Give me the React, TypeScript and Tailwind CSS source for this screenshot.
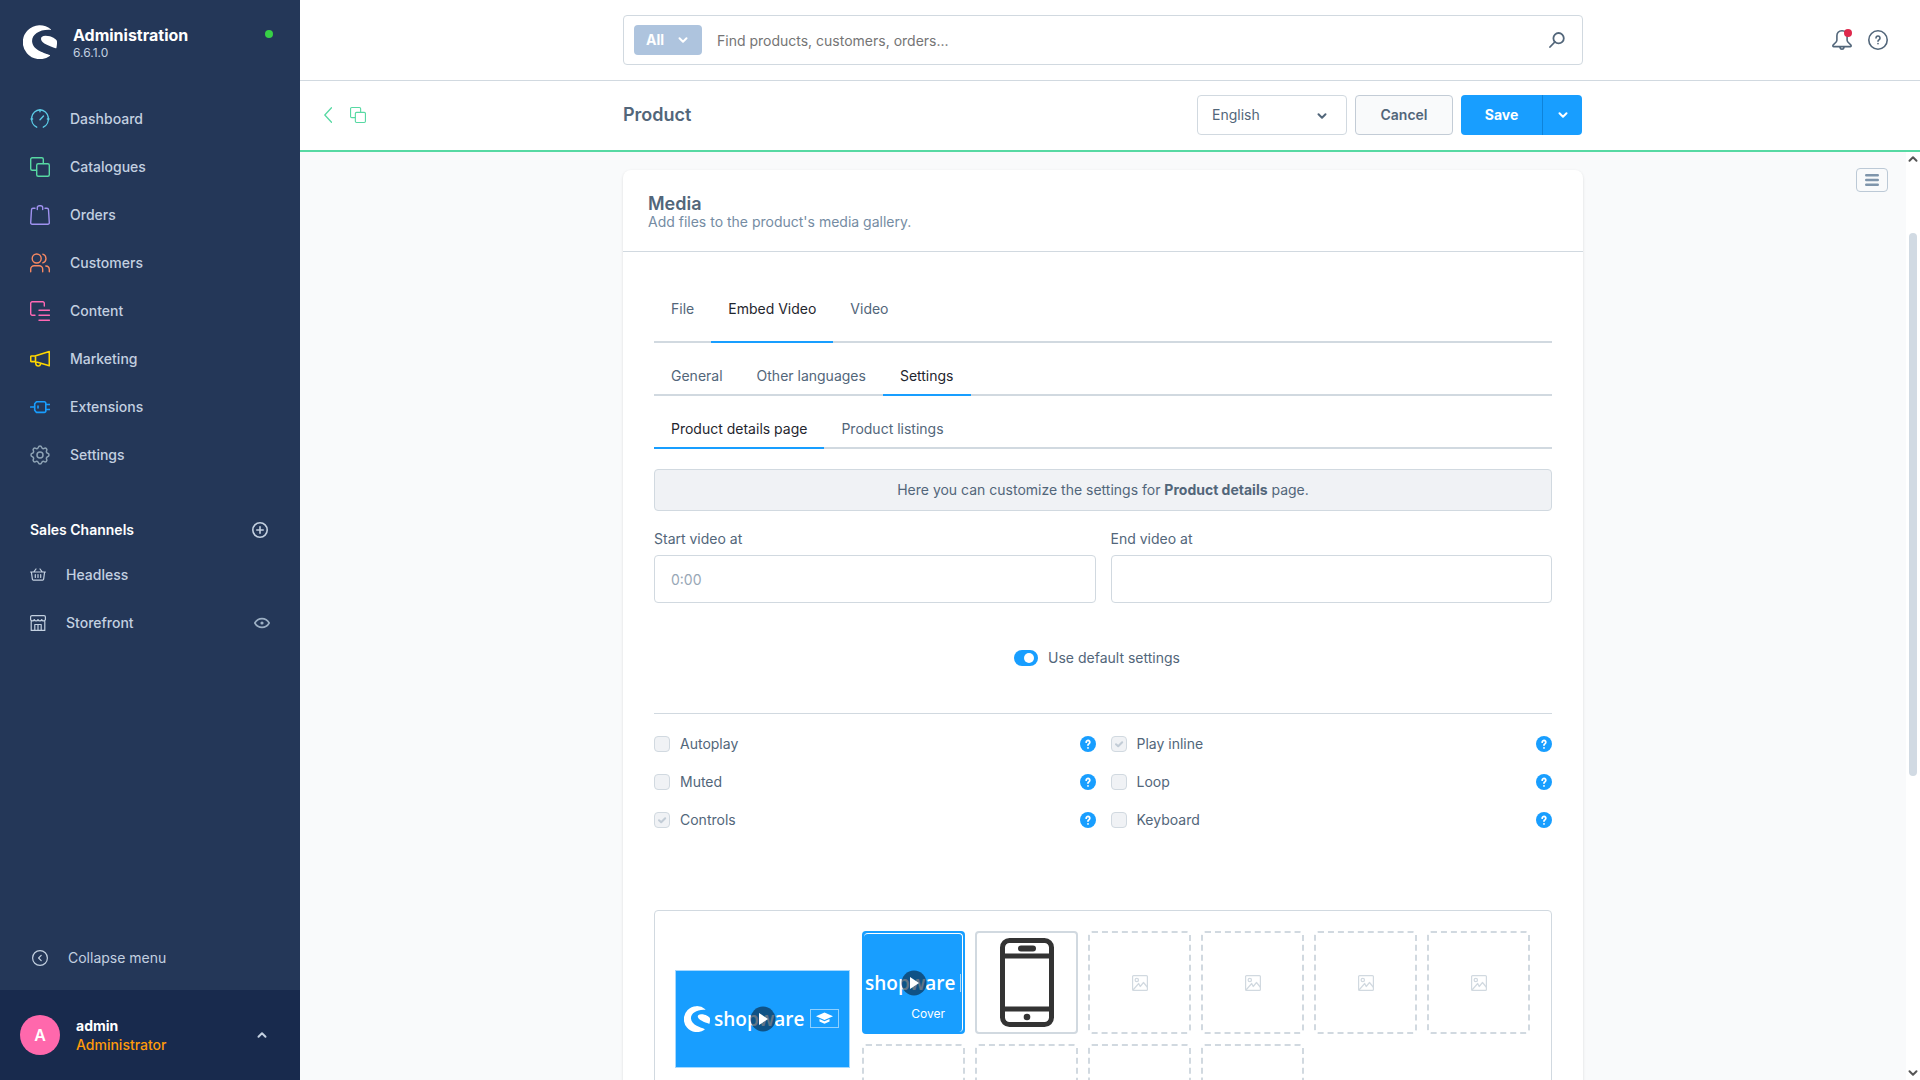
import { ReactNode, useState } from "react";
import clsx from "clsx";
import { TbSettings } from "react-icons/tb";

const Icon = ({
  size = 20,
  box = 20,
  stroke = 1.4,
  className,
  children,
}: {
  size?: number;
  box?: number;
  stroke?: number;
  className?: string;
  children: ReactNode;
}) => (
  <svg
    width={size}
    height={size}
    viewBox={`0 0 ${box} ${box}`}
    fill="none"
    stroke="currentColor"
    strokeWidth={stroke}
    strokeLinecap="round"
    strokeLinejoin="round"
    className={clsx("shrink-0", className)}
    aria-hidden="true"
  >
    {children}
  </svg>
);

const Chevron = ({ up = false, className }: { up?: boolean; className?: string }) => (
  <Icon size={10} box={10} stroke={2} className={className}>
    <path d={up ? "M1.5 6.7 5 3.3 8.5 6.7" : "M1.5 3.3 5 6.7 8.5 3.3"} />
  </Icon>
);

const CopyPath = () => (
  <>
    <path d="M6.5 13.3H2.2A1.5 1.5 0 0 1 .7 11.8V2.2A1.5 1.5 0 0 1 2.2.7h9.6a1.5 1.5 0 0 1 1.5 1.5v4.3" />
    <rect x="6.7" y="6.7" width="12.6" height="12.6" rx="1.5" />
  </>
);

const ShopwareMark = ({ size, className }: { size: number; className?: string }) => (
  <svg
    width={size}
    height={size}
    viewBox="0 0 34 34"
    fill="currentColor"
    className={clsx("shrink-0", className)}
    aria-hidden="true"
  >
    <path d="M27.8 4.2A17 17 0 1 0 26.8 30.9c.4-.3.4-.7-.1-.9-3.9-1.6-17.1-4.6-17.6-13.5C8.8 9.6 16.5 4.2 27.5 4.9c.5 0 .7-.4.3-.7z" />
    <path d="M33.9 16c-.3-1.5-5-5.2-11.4-5.2-3.8 0-4.8 1.8-4.4 3.7.7 3.9 8.4 6.6 14.6 8.8.4.1.6 0 .7-.4.5-2.2.8-4.6.5-6.9z" />
  </svg>
);

const navItems = [
  {
    label: "Dashboard",
    color: "text-[#5bcbe6]",
    icon: (
      <Icon>
        <path d="M6.7 18.2A9.2 9.2 0 0 1 10 .8a9.2 9.2 0 0 1 3.3 17.4M10 1v1.8M1 10h1.6M17.4 10H19M10 10.8 13.5 7" />
      </Icon>
    ),
  },
  {
    label: "Catalogues",
    color: "text-[#57d9a3]",
    icon: (
      <Icon>
        <CopyPath />
      </Icon>
    ),
  },
  {
    label: "Orders",
    color: "text-[#a092f0]",
    icon: (
      <Icon>
        <path d="M5 3.3H3A1.5 1.5 0 0 0 1.5 4.7L.7 17.7a1.5 1.5 0 0 0 1.5 1.6h15.6a1.5 1.5 0 0 0 1.5-1.6l-.8-13A1.5 1.5 0 0 0 17 3.3h-2M7.3 4.5V2.7a2 2 0 0 1 2-2h1.4a2 2 0 0 1 2 2v1.8" />
      </Icon>
    ),
  },
  {
    label: "Customers",
    color: "text-[#f88962]",
    icon: (
      <Icon>
        <circle cx="6.7" cy="5.5" r="4.5" />
        <path d="M.7 18.7v-2.4a3.5 3.5 0 0 1 3.5-3.5h5a3.5 3.5 0 0 1 3.5 3.5v2.4M12.8 1.2a4.5 4.5 0 0 1 0 8.6M15.8 13a3.7 3.7 0 0 1 3.5 3.7v2" />
      </Icon>
    ),
  },
  {
    label: "Content",
    color: "text-[#ff68b4]",
    icon: (
      <Icon>
        <path d="M14.3 5V2.2A1.5 1.5 0 0 0 12.8.7H2.2A1.5 1.5 0 0 0 .7 2.2v10.6a1.5 1.5 0 0 0 1.5 1.5H5M9 9.3h10.5M9 14.3h10.5M9 19.3h10.5" />
      </Icon>
    ),
  },
  {
    label: "Marketing",
    color: "text-[#ffd700]",
    icon: (
      <Icon stroke={1.6}>
        <path d="M5 7H1.6a.9.9 0 0 0-.9.9v3.8a.9.9 0 0 0 .9.9H5l14.3 4.2V2.6zM5.5 7v5.6M5.8 13.2v1.7a2.4 2.4 0 0 0 4.7.4" />
      </Icon>
    ),
  },
  {
    label: "Extensions",
    color: "text-[#189eff]",
    icon: (
      <Icon stroke={1.6}>
        <path d="M.7 10h4M6.5 4.8h7.8a1.5 1.5 0 0 1 1.5 1.5v7.6a1.5 1.5 0 0 1-1.5 1.5H6.5L4.7 13.3V6.8zM16 7.5h3.5M16 12.5h3.5M8 9v2" />
      </Icon>
    ),
  },
  {
    label: "Settings",
    color: "text-[#8ea3b5]",
    icon: <TbSettings size={24} strokeWidth={1.5} className="-mx-0.5 shrink-0" />,
  },
];

const Sidebar = () => (
  <aside className="flex w-[300px] shrink-0 flex-col bg-[#243758] text-sm text-[#c3d0e0]">
    <div className="flex items-start px-[23px] pt-[25px]">
      <ShopwareMark size={34} className="text-white" />
      <div className="ml-4 flex-1">
        <p className="text-base leading-5 font-bold text-white">Administration</p>
        <p className="text-xs leading-4">6.6.1.0</p>
      </div>
      <span className="mt-[5px] mr-1 size-2 rounded-full bg-[#37d046]" />
    </div>

    <nav className="mt-[34px] font-medium">
      {navItems.map((item) => (
        <a key={item.label} href="#" className="flex h-12 items-center gap-5 px-[30px]">
          <span className={clsx("flex w-5 justify-center", item.color)}>{item.icon}</span>
          {item.label}
        </a>
      ))}
    </nav>

    <section className="mt-7">
      <div className="flex h-[46px] items-center justify-between pr-8 pl-[30px]">
        <h2 className="font-semibold text-white">Sales Channels</h2>
        <button type="button" aria-label="Add sales channel">
          <Icon size={16} box={16} stroke={1.6}>
            <circle cx="8" cy="8" r="7.2" />
            <path d="M8 4.8v6.4M4.8 8h6.4" />
          </Icon>
        </button>
      </div>
      <a href="#" className="flex h-11 items-center gap-5 px-[30px] font-medium">
        <Icon size={16} box={16} stroke={1.2}>
          <path d="M.6 5h14.8M1.4 5l1 7.3a1 1 0 0 0 1 .9h9.2a1 1 0 0 0 1-.9l1-7.3M3.8 4.8 6 2M12.2 4.8 10 2M5.3 7.5v3M8 7.5v3M10.7 7.5v3" />
        </Icon>
        Headless
      </a>
      <a href="#" className="flex h-[52px] items-center gap-5 px-[30px] font-medium">
        <Icon size={16} box={16} stroke={1.2}>
          <path d="M.6 4.5V2A1.4 1.4 0 0 1 2 .6h12A1.4 1.4 0 0 1 15.4 2v2.5M.6 4.5a1.9 1.9 0 0 0 3.7 0 1.9 1.9 0 0 0 3.7 0 1.9 1.9 0 0 0 3.7 0 1.9 1.9 0 0 0 3.7 0M1.2 6.5v8.9h13.6V6.5M4.8 15.4V9.5h6.4v5.9M8 9.5v5.9" />
        </Icon>
        <span className="flex-1">Storefront</span>
        <Icon size={16} box={16} stroke={1.6} className="text-[#9db0c4]">
          <path d="M.8 8C2.4 5.2 5 3.6 8 3.6S13.6 5.2 15.2 8c-1.6 2.8-4.2 4.4-7.2 4.4S2.4 10.8.8 8z" />
          <circle cx="8" cy="8" r=".8" />
        </Icon>
      </a>
    </section>

    <button type="button" className="mt-auto flex h-16 items-center gap-5 px-8">
      <Icon size={16} box={16} stroke={1.2}>
        <circle cx="8" cy="8" r="7.4" />
        <path d="M9.2 5.4 6.6 8l2.6 2.6" />
      </Icon>
      Collapse menu
    </button>

    <div className="flex h-[90px] shrink-0 items-center gap-4 bg-[#182a4d] pr-[33px] pl-5">
      <span className="flex size-10 items-center justify-center rounded-full bg-[#ff68ac] text-base font-semibold text-white">
        A
      </span>
      <div className="flex-1 leading-[19px]">
        <p className="font-bold text-white">admin</p>
        <p className="font-medium text-[#ff9a0a]">Administrator</p>
      </div>
      <button type="button" aria-label="Open user menu">
        <Chevron up />
      </button>
    </div>
  </aside>
);

const SearchBar = () => (
  <header className="grid h-[81px] shrink-0 grid-cols-[1fr_minmax(0,960px)_1fr] items-center border-b border-[#d1d9e0] bg-white pr-[14px]">
    <div className="col-start-2 flex h-[50px] items-center rounded border border-[#d1d9e0] pr-[17px] pl-[10px]">
      <button
        type="button"
        className="flex h-[30px] w-[68px] items-center justify-between rounded bg-[#aec4de] pr-[14px] pl-3 text-sm font-bold text-white"
      >
        All
        <Chevron />
      </button>
      <input
        type="search"
        aria-label="Search"
        placeholder="Find products, customers, orders..."
        className="ml-[15px] h-10 flex-1 text-sm outline-none placeholder:text-[#757575]"
      />
      <Icon size={16} box={16} stroke={1.8} className="text-[#52667a]">
        <circle cx="9.6" cy="6.2" r="5.2" />
        <path d="M5.8 10 1 15" />
      </Icon>
    </div>
    <div className="flex items-center justify-end gap-4 pr-[18px] text-[#52667a]">
      <button type="button" aria-label="Notifications" className="relative">
        <Icon stroke={1.6}>
          <path d="M10 .8C6.6.8 4.9 3 4.9 5.8v4.4c0 2.9-4.1 3.7-4.1 5.6 0 .5.4.8.8.8h16.8c.4 0 .8-.3.8-.8 0-1.900-4.100-2.700-4.100-5.600V5.800C15.100 3 13.400.8 10 .8zM8 17.500c.2 1.100 1 1.700 2 1.700s1.800-.6 2-1.700" />
        </Icon>
        <span className="absolute -top-px right-0 size-2 rounded-full bg-[#de294c]" />
      </button>
      <button type="button" aria-label="Help">
        <Icon stroke={1.6}>
          <circle cx="10" cy="10" r="9.2" />
          <path d="M8 8a2 2 0 1 1 3.1 1.7c-.7.4-1.1.8-1.1 1.5M10 13.6v.1" />
        </Icon>
      </button>
    </div>
  </header>
);

const PageHeader = () => (
  <div className="grid h-[71px] shrink-0 grid-cols-[1fr_minmax(0,960px)_1fr] items-center border-b-2 border-[#57d9a3] bg-white pr-[14px] pb-px text-sm text-[#52667a]">
    <div className="flex items-center gap-[18px] pl-6 text-[#57d9a3]">
      <a href="#" aria-label="Back">
        <svg width="8" height="16" viewBox="0 0 8 16" fill="none" stroke="currentColor" strokeWidth="1.3">
          <path d="M7.5.8.8 8l6.7 7.2" strokeLinecap="round" strokeLinejoin="round" />
        </svg>
      </a>
      <Icon size={16}>
        <CopyPath />
      </Icon>
    </div>
    <div className="flex items-center gap-2 pr-px">
      <h1 className="flex-1 text-lg font-semibold">Product</h1>
      <div className="relative">
        <select
          aria-label="Language"
          className="block h-10 w-[150px] appearance-none rounded border border-[#d1d9e0] bg-white pl-3.5 outline-none"
        >
          <option>English</option>
          <option>Deutsch</option>
        </select>
        <Chevron className="pointer-events-none absolute top-4 right-5" />
      </div>
      <button
        type="button"
        className="h-10 w-[98px] rounded border border-[#c3ccd6] bg-[#f9fafb] font-semibold"
      >
        Cancel
      </button>
      <div className="flex h-10 text-white">
        <button type="button" className="w-[81px] rounded-l bg-[#189eff] font-bold">
          Save
        </button>
        <button
          type="button"
          aria-label="More save options"
          className="flex w-10 items-center justify-center rounded-r border-l border-[#0f83d9] bg-[#189eff]"
        >
          <Chevron />
        </button>
      </div>
    </div>
  </div>
);

const Tabs = ({ items, initial, tall = false }: { items: string[]; initial: string; tall?: boolean }) => {
  const [active, setActive] = useState(initial);

  return (
    <div role="tablist" className="flex border-b-2 border-[#d1d9e0]">
      {items.map((item) => (
        <button
          key={item}
          type="button"
          role="tab"
          aria-selected={item === active}
          onClick={() => setActive(item)}
          className={clsx(
            "-mb-0.5 border-b-2 px-[17px] leading-5",
            tall ? "pt-[18px] pb-[22px]" : "pt-[23px] pb-2",
            item === active ? "border-[#189eff] text-[#1f262e]" : "border-transparent",
          )}
        >
          {item}
        </button>
      ))}
    </div>
  );
};

const options = [
  { id: "autoplay", label: "Autoplay", checked: false },
  { id: "inline", label: "Play inline", checked: true },
  { id: "muted", label: "Muted", checked: false },
  { id: "loop", label: "Loop", checked: false },
  { id: "controls", label: "Controls", checked: true },
  { id: "keyboard", label: "Keyboard", checked: false },
];

const Option = ({ id, label, checked }: { id: string; label: string; checked: boolean }) => (
  <div className="flex h-[38px] items-center">
    <span className="relative size-4">
      <input
        id={id}
        type="checkbox"
        defaultChecked={checked}
        disabled
        className="block size-4 appearance-none rounded border border-[#d1d9e0] bg-[#f0f2f5]"
      />
      {checked && (
        <Icon size={16} box={16} stroke={2} className="absolute inset-0 text-[#c2ccd6]">
          <path d="M5 8.2 7.2 10.3 11.2 6.2" />
        </Icon>
      )}
    </span>
    <label htmlFor={id} className="ml-2.5 flex-1">
      {label}
    </label>
    <button type="button" aria-label={`Help for ${label}`} className="rounded-full bg-[#189eff] text-white">
      <Icon size={16} box={16} stroke={1.8}>
        <path d="M6.2 6.2a1.8 1.8 0 1 1 2.8 1.5c-.7.4-1 .7-1 1.3M8 11.8v.1" />
      </Icon>
    </button>
  </div>
);

const PlayBadge = () => (
  <svg width="26" height="26" viewBox="0 0 26 26" className="absolute inset-0 m-auto" aria-hidden="true">
    <circle cx="13" cy="13" r="12.5" fill="#0a2a45" fillOpacity=".65" />
    <path d="M9 7v12l9-6z" fill="#fff" />
  </svg>
);

const Wordmark = () => (
  <span className="font-['Open_Sans',sans-serif] text-[19px] leading-6 font-semibold text-white">shopware</span>
);

const Gallery = () => (
  <div className="grid grid-cols-[175px_1fr] gap-3 rounded border border-[#d1d9e0] py-5 pr-[21px] pl-5">
    <div className="flex aspect-square items-center self-start">
      <div className="relative flex h-[98px] w-full items-center bg-[#189eff] pl-[9px] ring-1 ring-[#a5d8ff] ring-inset">
        <ShopwareMark size={26} className="text-white" />
        <span className="ml-1">
          <Wordmark />
        </span>
        <svg width="29" height="19" viewBox="0 0 29 19" className="ml-1.5 shrink-0" aria-hidden="true">
          <rect x=".5" y=".5" width="28" height="18" fill="none" stroke="#8fd0ff" />
          <path d="M14.5 3.5 6 7.3l8.5 3.8L23 7.3zM9.5 10v2.6l5 2.2 5-2.2V10l-5 2.3z" fill="#fff" />
        </svg>
        <PlayBadge />
      </div>
    </div>
    <div className="grid grid-cols-6 gap-2.5">
      <div className="relative flex aspect-square items-center overflow-hidden rounded border-2 border-[#189eff] bg-[#189eff] pl-px">
        <Wordmark />
        <span className="ml-auto h-[18px] border-l border-[#a5d8ff] pl-0.5" />
        <span className="absolute inset-0 rounded border-t border-r border-white" />
        <PlayBadge />
        <span className="absolute right-[18px] bottom-2.5 text-xs leading-4 text-white">Cover</span>
      </div>
      <div className="flex aspect-square items-center justify-center rounded border-2 border-[#d1d9e0]">
        <svg width="54" height="89" viewBox="0 0 54 89" fill="none" stroke="#333" strokeWidth="5" aria-hidden="true">
          <rect x="2.5" y="2.5" width="49" height="84" rx="7" />
          <path d="M2.5 18h49M2.5 71h49" />
          <path d="M21 10.5h12" strokeWidth="6" strokeLinecap="round" />
          <circle cx="27" cy="79" r="3.3" fill="#333" stroke="none" />
        </svg>
      </div>
      {Array(8)
        .fill(null)
        .map((_, index) => (
          <div
            key={index}
            className="flex aspect-square items-center justify-center rounded border-2 border-dashed border-[#d1d9e0] text-[#d1d9e0]"
          >
            <Icon size={16} box={16} stroke={1.2}>
              <rect x=".6" y=".6" width="14.8" height="14.8" rx="1" />
              <circle cx="4.8" cy="5" r="1.7" />
              <path d="m1 15 5.7-6.5 1.5 3L11.5 7.5 15.2 12" />
            </Icon>
          </div>
        ))}
    </div>
  </div>
);

const MediaCard = () => (
  <section className="mx-auto w-full max-w-[960px] rounded-lg bg-white text-sm text-[#52667a] shadow-[0_1px_3px_rgba(0,0,0,0.12)]">
    <div className="border-b border-[#d1d9e0] px-[25px] pt-6 pb-[21px]">
      <h2 className="text-lg leading-5 font-semibold">Media</h2>
      <p className="leading-4 text-[#758ca3]">Add files to the product's media gallery.</p>
    </div>

    <div className="px-[31px] pt-[29px] pb-8">
      <Tabs items={["File", "Embed Video", "Video"]} initial="Embed Video" tall />
      <Tabs items={["General", "Other languages", "Settings"]} initial="Settings" />
      <Tabs items={["Product details page", "Product listings"]} initial="Product details page" />

      <p className="mt-5 rounded border border-[#d1d9e0] bg-[#f0f2f5] py-2.5 text-center leading-5">
        Here you can customize the settings for <strong className="font-bold">Product details</strong> page.
      </p>

      <div className="mt-[18px] grid grid-cols-2 gap-[15px]">
        <div>
          <label htmlFor="start" className="block leading-5">
            Start video at
          </label>
          <input
            id="start"
            placeholder="0:00"
            className="mt-1.5 h-12 w-full rounded border border-[#d1d9e0] px-4 outline-none placeholder:text-[#98a7b6]"
          />
        </div>
        <div>
          <label htmlFor="end" className="block leading-5">
            End video at
          </label>
          <input id="end" className="mt-1.5 h-12 w-full rounded border border-[#d1d9e0] px-4 outline-none" />
        </div>
      </div>

      <div className="mt-11 flex h-[22px] items-center justify-center gap-2.5 pr-3">
        <span className="relative flex h-4 w-6">
          <input
            id="defaults"
            type="checkbox"
            role="switch"
            defaultChecked
            className="peer h-4 w-6 appearance-none rounded-full bg-[#c2ccd6] checked:bg-[#189eff]"
          />
          <span className="pointer-events-none absolute top-[3px] left-[3px] size-2.5 rounded-full bg-white peer-checked:left-2.5" />
        </span>
        <label htmlFor="defaults">Use default settings</label>
      </div>

      <hr className="mt-11 border-[#d1d9e0]" />

      <div className="mt-[11px] grid grid-cols-2 gap-x-[15px]">
        {options.map((option) => (
          <Option key={option.id} {...option} />
        ))}
      </div>

      <div className="mt-[71px]">
        <Gallery />
      </div>
    </div>
  </section>
);

const ScrollTrack = () => (
  <div className="flex w-[14px] shrink-0 flex-col items-center justify-between bg-white py-0.5 text-[#555]" aria-hidden="true">
    <Chevron up />
    <div className="mt-[69px] w-full flex-1 px-[3px]">
      <div className="h-[65%] rounded-full bg-[#d1dae3]" />
    </div>
    <Chevron />
  </div>
);

const App = () => (
  <div className="flex h-screen overflow-hidden font-['Inter',sans-serif]">
    <Sidebar />
    <div className="flex min-w-0 flex-1 flex-col">
      <SearchBar />
      <PageHeader />
      <div className="flex min-h-0 flex-1">
        <main className="relative min-w-0 flex-1 overflow-hidden bg-[#f9fafb] pt-[18px]">
          <MediaCard />
          <button
            type="button"
            aria-label="Open sidebar"
            className="absolute top-4 right-[18px] flex h-6 w-8 items-center justify-center rounded border border-[#bcc9d6] text-[#7f95ab]"
          >
            <Icon size={14} box={14} stroke={2.4}>
              <path d="M1.2 2.3h11.6M1.2 7h11.6M1.2 11.7h11.6" />
            </Icon>
          </button>
        </main>
        <ScrollTrack />
      </div>
    </div>
  </div>
);

export default App;
